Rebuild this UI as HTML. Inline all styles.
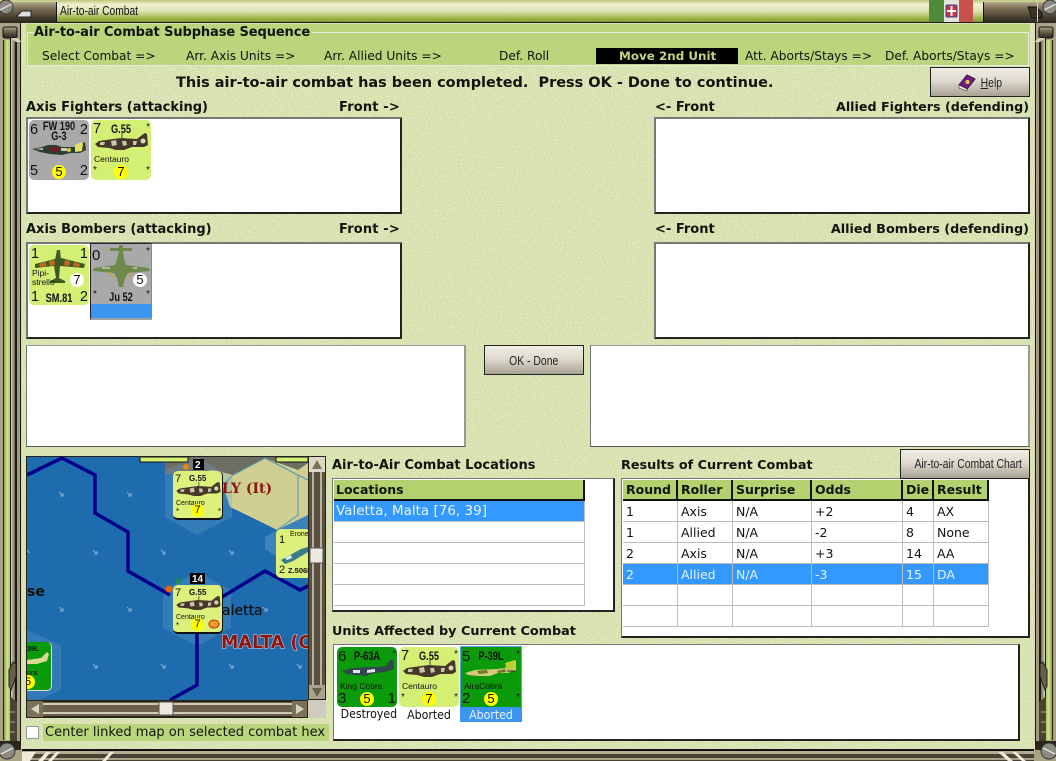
<!DOCTYPE html>
<html><head><meta charset="utf-8">
<style>
html,body{margin:0;padding:0;width:1056px;height:761px;overflow:hidden;background:#d3dea8}
*{box-sizing:border-box}
body{position:relative;font-family:"DejaVu Sans","Liberation Sans",sans-serif;color:#10140c}
.a{position:absolute}
.t{position:absolute;white-space:pre;line-height:16px;font-size:12.2px}
.b{font-weight:bold;font-size:13px}
.box{position:absolute;background:#fff;border:2px solid #222;border-top-color:#777;border-left-color:#777}
.btn{position:absolute;background:linear-gradient(#f1ede4,#e0dbcf 45%,#a8a294);border:1px solid #222;text-align:center;font-family:"Liberation Sans",sans-serif;font-size:13px;color:#222}
.btn span{display:inline-block;transform:scaleX(.8)}
.cell{position:absolute;height:21px;border-right:1px solid #bbb;border-bottom:1px solid #bbb;font-size:12.5px;line-height:21px;padding-left:3px;white-space:pre;background:#fff}
.hd{position:absolute;height:21px;background:#b4d170;border-right:2px solid #111;border-bottom:2px solid #111;font-weight:bold;font-size:12.5px;line-height:20px;padding-left:3px;white-space:pre}
.sel{background:#3399ff;color:#e8f2ff}
.c{position:absolute;width:60px;height:60px;border-radius:5px;font-family:"Liberation Sans",sans-serif;color:#111;overflow:hidden}
.c span{position:absolute;white-space:pre;line-height:1}
.y{background:#d3ef74}.g{background:#a9a9a9}.d{background:#0a9a0a}
.n{font-size:14.5px}
.nm{font-size:12px;font-weight:bold;left:0;width:100%;text-align:center;transform:scaleX(.77)}
.sm{font-size:8.5px}
.die{position:absolute;width:14px;height:14px;border-radius:50%;background:#ff0;text-align:center;font-size:13px;line-height:14px}
.wh{background:#fff}
.c svg{position:absolute;left:0;top:0}
.cap{position:absolute;font-size:12.5px;font-family:"DejaVu Sans",sans-serif;text-align:center;line-height:16px;white-space:pre;transform:scaleX(.88)}
</style></head><body>

<svg class="a" style="left:0;top:0" width="1056" height="761">
<defs>
<filter id="nz" x="0" y="0" width="100%" height="100%"><feTurbulence type="fractalNoise" baseFrequency=".8" numOctaves="2" seed="4"/><feColorMatrix values="0 0 0 0 .95 0 0 0 0 .97 0 0 0 0 .82 3 0 0 0 -1.3"/></filter>
<filter id="nd" x="0" y="0" width="100%" height="100%"><feTurbulence type="fractalNoise" baseFrequency=".7" numOctaves="2" seed="9"/><feColorMatrix values="0 0 0 0 .68 0 0 0 0 .76 0 0 0 0 .46 0 3 0 0 -1.4"/></filter>
<linearGradient id="tb" x1="0" y1="0" x2="0" y2="1"><stop offset="0" stop-color="#bcc878"/><stop offset=".2" stop-color="#eef0d2"/><stop offset=".5" stop-color="#dfe4b4"/><stop offset=".8" stop-color="#a4b850"/><stop offset="1" stop-color="#7f9a2a"/></linearGradient>
<linearGradient id="br" x1="0" y1="0" x2="0" y2="1"><stop offset="0" stop-color="#b4aa90"/><stop offset=".3" stop-color="#7d7058"/><stop offset=".7" stop-color="#4a4232"/><stop offset="1" stop-color="#2b261c"/></linearGradient>
<linearGradient id="gv" x1="0" y1="0" x2="1" y2="0"><stop offset="0" stop-color="#8a9a50"/><stop offset=".5" stop-color="#d0e48c"/><stop offset="1" stop-color="#b0c868"/></linearGradient>
<linearGradient id="gy" x1="0" y1="0" x2="1" y2="0"><stop offset="0" stop-color="#d6d2bc"/><stop offset="1" stop-color="#6f6a54"/></linearGradient>
<g id="fr">
<rect x="0" y="23" width="22" height="727" fill="#a8a484"/>
<rect x="3" y="40" width="1" height="700" fill="#2a2418"/>
<rect x="4" y="40" width="6" height="700" fill="url(#gv)"/>
<rect x="10" y="38" width="1" height="700" fill="#1d1a12"/>
<rect x="11" y="38" width="4" height="660" fill="url(#gy)"/>
<rect x="15" y="38" width="2" height="700" fill="#1d1a12"/>
<rect x="17" y="30" width="3" height="710" fill="#a09a80"/>
<rect x="20" y="23" width="1" height="727" fill="#1d1a12"/>
<rect x="21" y="23" width="1" height="727" fill="#d8d8b8"/>
<rect x="3" y="27" width="14" height="11" rx="2" fill="url(#br)" stroke="#111"/>
<path d="M11 38h6l5 4h-6z" fill="#d4d0b4"/>
<path d="M10 696l7 6v44H10z" fill="#4a4232"/>
<path d="M11 690l5-14v-12l-3-2-4 8v16z" fill="#6a6048" stroke="#222"/>
<path d="M10 712h5M10 722h5M10 732h5" stroke="#b4aa90"/>
<rect x="0" y="741" width="21" height="9" fill="#2b261c"/>
<rect x="0" y="750" width="22" height="11" fill="#a8a484"/>
<circle cx="7" cy="751" r="8" fill="#8b8b84" stroke="#333"/><path d="M1 754l12-6" stroke="#e4e4de" stroke-width="1.5"/>
</g>
<symbol id="g55" viewBox="0 0 60 60"><path d="M4 24l4-3 14-2 8-1 16 1 5-4 3-2 2 1 1 11-4 2-12 0-8 3-8 0-7-2-11-1z" fill="#47392a"/><path d="M9 22l5 0-1 3-4 0zM20 21l5-1 1 5-5 1zM31 21l4 0 1 4-4 1zM42 21l4 0-1 4-3 0z" fill="#c9c6ae"/><circle cx="52" cy="21" r="2.5" fill="#d8d4b8"/><path d="M31 13v6" stroke="#445" stroke-width="1"/></symbol>
<symbol id="wing" viewBox="0 0 60 60"><path d="M6 19l24-6 2 0 24 6-1 4-24-2-1 12 6 3v2H21v-2l6-3-2-12-19 2z" fill="#3f5a24"/><path d="M10 19l6-2 2 4-7 1zM20 16l5-1 1 5-5 1zM36 15l5 1-1 5-5-1zM45 17l6 2-1 3-6-1z" fill="#c46a1c"/><path d="M28 5h3l1 10-1 6h-4l-1-6z" fill="#3f5a24"/></symbol>
</defs>
<rect width="1056" height="761" fill="#d3dea8"/>
<rect x="22" y="22" width="1012" height="728" filter="url(#nd)" opacity=".35"/>
<rect x="22" y="22" width="1012" height="728" filter="url(#nz)" opacity=".6"/>
<use href="#fr"/>
<use href="#fr" transform="translate(1056,0) scale(-1,1)"/>
<!-- top bar -->
<rect x="0" y="0" width="1056" height="22" fill="url(#tb)"/>
<rect x="0" y="22" width="1056" height="1" fill="#1a1a10"/>
<rect x="0" y="2" width="57" height="21" fill="url(#br)"/>
<rect x="56" y="2" width="1" height="21" fill="#111"/>
<path d="M16 17l6-6h9v6z" fill="#ddd" stroke="#222"/>
<circle cx="6" cy="7" r="7" fill="#8b8b84" stroke="#333"/><path d="M0 10l12-6" stroke="#ddd" stroke-width="1.5"/>
<!-- flag -->
<rect x="929" y="0" width="15" height="22" fill="#4f8c3a"/><rect x="944" y="0" width="15" height="22" fill="#e4e4dc"/><rect x="959" y="0" width="14" height="22" fill="#c8524c"/>
<rect x="946" y="5" width="11" height="12" rx="1" fill="#c8323c" stroke="#3a4a9a"/><path d="M951.5 6v10M947 11h9" stroke="#fff" stroke-width="2"/>
<rect x="983" y="2" width="73" height="21" fill="url(#br)"/>
<rect x="983" y="2" width="1" height="21" fill="#111"/>
<path d="M1028 7h8l6 6v5h-10z" fill="#3a3426" stroke="#111"/>
<circle cx="1050" cy="7" r="7" fill="#8b8b84" stroke="#333"/><path d="M1044 10l12-6" stroke="#ddd" stroke-width="1.5"/>
<rect x="1037" y="0" width="1" height="22" fill="#d8dc8c"/>
<!-- bottom frame -->
<rect x="22" y="749" width="1012" height="2" fill="#111"/>
<rect x="22" y="751" width="1012" height="10" fill="#4a4232"/>
<rect x="22" y="751" width="1012" height="3" fill="#b4aa90"/>
<rect x="22" y="758" width="1012" height="2" fill="#a8a08a"/>
<path d="M22 752h14l-6 9h-8zM38 761l8-9h5l-8 9zM48 761l8-9h4l-8 9zM102 761l8-9h4l-8 9zM998 752l10 9h5l-10-9zM1016 752l10 9h-4l-10-9z" fill="#efeadb"/>
</svg>

<!-- title -->
<div class="t" style="left:60px;top:3px;font-family:'Liberation Sans',sans-serif;font-size:12.5px;transform:scaleX(.82);transform-origin:0 0;color:#111">Air-to-air Combat</div>

<!-- group -->
<div class="a" style="left:26px;top:24px;width:1004px;height:42px;background:#bbd57c"></div>
<div class="a" style="left:27px;top:32px;width:1002px;height:34px;border:1px solid #e8e8dc"></div>
<div class="t b" style="left:34px;top:24px;height:16px;margin-top:1px;background:#bbd57c;padding-right:2px;letter-spacing:-.1px">Air-to-air Combat Subphase Sequence</div>
<div class="t" style="left:42px;top:48px">Select Combat =&gt;</div>
<div class="t" style="left:186px;top:48px">Arr. Axis Units =&gt;</div>
<div class="t" style="left:324px;top:48px">Arr. Allied Units =&gt;</div>
<div class="t" style="left:499px;top:48px">Def. Roll</div>
<div class="a" style="left:596px;top:48px;width:142px;height:16px;background:#000"></div>
<div class="t" style="left:619px;top:48px;font-weight:bold;color:#bdd67e;font-size:11.9px">Move 2nd Unit</div>
<div class="t" style="left:745px;top:48px">Att. Aborts/Stays =&gt;</div>
<div class="t" style="left:885px;top:48px">Def. Aborts/Stays =&gt;</div>

<div class="t" style="left:176px;top:75px;font-weight:bold;font-size:14.47px">This air-to-air combat has been completed.  Press OK - Done to continue.</div>

<div class="btn" style="left:930px;top:67px;width:100px;height:30px;line-height:29px;padding-left:47px;text-align:left"><span><u>H</u>elp</span></div>
<svg class="a" style="left:958px;top:74px" width="18" height="18"><path d="M1 11l8-10 8 4-8 10z" fill="#7a1a8a" stroke="#2a1030"/><path d="M1 11l8 4 0 2-8-3z" fill="#eee" stroke="#333" stroke-width=".6"/><circle cx="9.500" cy="8" r="2" fill="#e8d040"/></svg>

<div class="t b" style="left:26px;top:100px">Axis Fighters (attacking)</div>
<div class="t b" style="left:339px;top:100px;letter-spacing:.15px">Front -&gt;</div>
<div class="t b" style="left:655px;top:100px">&lt;- Front</div>
<div class="t b" style="right:27px;top:99px;font-size:12.7px">Allied Fighters (defending)</div>
<div class="box" style="left:26px;top:117px;width:376px;height:97px"></div>
<div class="box" style="left:654px;top:117px;width:376px;height:97px"></div>

<div class="t b" style="left:26px;top:222px">Axis Bombers (attacking)</div>
<div class="t b" style="left:339px;top:222px;letter-spacing:.15px">Front -&gt;</div>
<div class="t b" style="left:655px;top:222px">&lt;- Front</div>
<div class="t b" style="right:27px;top:222px;font-size:12.8px">Allied Bombers (defending)</div>
<div class="box" style="left:26px;top:242px;width:376px;height:97px"></div>
<div class="box" style="left:654px;top:242px;width:376px;height:97px"></div>

<div class="box" style="left:26px;top:345px;width:440px;height:102px;border-width:1px 2px 1px 1px;border-color:#999 #999 #555 #777"></div>
<div class="box" style="left:590px;top:345px;width:440px;height:102px;border-width:1px 2px 1px 1px;border-color:#999 #999 #555 #777"></div>
<div class="btn" style="left:484px;top:345px;width:100px;height:30px;line-height:29px"><span>OK - Done</span></div>

<!-- counters row 1 -->
<div class="c g" style="left:29px;top:120px">
<svg width="60" height="60"><path d="M3 29l10-2 6-2 8 0 6 2 16 0 5-4 2-1 1 8-6 3-10 0-8 2-12-1-10-2z" fill="#2e3d30"/><path d="M20 27l10 0 1 4-9 1z" fill="#6a2020"/><path d="M6 29l8-1v2zM32 28h6v3h-6z" fill="#c8ccb8"/><path d="M46 25l6-3 2 2-1 7-7 1z" fill="#e8e060"/><circle cx="40" cy="30" r="2" fill="#d8c828"/></svg>
<span class="n" style="left:1px;top:3px">6</span><span class="n" style="right:1px;top:3px">2</span>
<span class="n" style="left:1px;top:44px">5</span><span class="n" style="right:1px;top:44px">2</span>
<span class="nm" style="top:0">FW 190</span><span class="nm" style="top:10px">G-3</span>
<div class="die" style="left:23px;top:45px">5</div></div>
<div class="c y" style="left:91px;top:120px">
<svg width="60" height="60"><use href="#g55" width="60" height="60"/></svg>
<span class="n" style="left:2px;top:2px">7</span><span style="right:1px;top:3px;font-size:10px">*</span>
<span class="nm" style="top:3px">G.55</span>
<span class="sm" style="left:3px;top:35px">Centauro</span>
<span style="left:2px;top:46px;font-size:10px">*</span><span style="right:1px;top:46px;font-size:10px">*</span>
<div class="die" style="left:23px;top:45px">7</div></div>

<!-- counters row 2 -->
<div class="c y" style="left:29px;top:245px">
<svg width="60" height="60"><use href="#wing" width="60" height="60"/></svg>
<span class="n" style="left:2px;top:2px">1</span><span class="n" style="right:1px;top:2px">1</span>
<span class="sm" style="left:3px;top:24px">Pipi-</span><span class="sm" style="left:3px;top:33px">strello</span>
<span class="n" style="left:2px;top:45px">1</span><span class="n" style="right:1px;top:45px">2</span>
<span class="nm" style="top:47px">SM.81</span>
<div class="die wh" style="left:41px;top:28px">7</div></div>
<div class="a" style="left:90px;top:243px;width:62px;height:77px;background:#3a96f0;border:1px solid #222;border-right-color:#b08040;border-bottom:2px solid #a0a0a0"></div>
<div class="c g" style="left:91px;top:244px;border-radius:0">
<svg width="60" height="60"><path d="M28 7h-9V4h9V1h4v3h9v3h-9l1 8 2 6 23 3 1 3-22 2-3 5-2 9h-4l-2-9-3-5-21-2 1-3 21-3 2-6z" fill="#6e8a4a"/><path d="M19 28l3 6M41 28l-3 6" stroke="#c8a030" stroke-width="1.5"/><path d="M11 24h8M46 24h-4" stroke="#e8e8e0"/></svg>
<span class="n" style="left:1px;top:4px;font-size:15px">0</span><span style="right:1px;top:3px;font-size:10px">*</span>
<span style="left:2px;top:46px;font-size:10px">*</span><span style="right:1px;top:46px;font-size:10px">*</span>
<span class="nm" style="top:47px">Ju 52</span>
<div class="die wh" style="left:42px;top:29px">5</div></div>

<!-- map -->
<div class="a" style="left:26px;top:456px;width:300px;height:262px;background:#222"></div>
<svg class="a" style="left:27px;top:457px" width="281" height="243" viewBox="27 457 281 243">
<rect x="27" y="457" width="281" height="243" fill="#1e6cae"/>
<path d="M165 457l0 13 57 13 8 24 27 13 20 10 31-15V457z" fill="#cfcf94"/>
<path d="M165 457h143v6l-10 7-33-12-32 17-20-5-26 4-22 0z" fill="#6e6d64"/>
<path d="M233 475l32-17 33 17v40l-21 15M298 475l10 5M233 475l-10 10" fill="none" stroke="#4a96a8"/>
<path d="M165 470l32-13 35 20v40l-35 18-32-18z" fill="#6ea4d0" opacity=".28"/>
<path d="M265 537l12-7 31-15v12l-31 30-12-8z" fill="#6ea4d0" opacity=".4"/>
<path d="M163 590l34-18 34 18v38l-34 18-34-18z" fill="#6ea4d0" opacity=".28"/>
<path d="M27 630l34 15v45l-34 15z" fill="#6ea4d0" opacity=".25"/>
<g fill="none" stroke="#00008a" stroke-width="3.5">
<path d="M27 475L62 458 95 475V513L128 532V571L170 595"/>
<path d="M222 597L265 571 300 590 308 586"/>
<path d="M197 633V685L170 700"/>
</g>
<g stroke="#a4c8e6" stroke-width="1" fill="none" opacity=".75">
<path d="M59 492l4 4m0-3v3h-3M127 492l4 4m0-3v3h-3M93 550l4 4m0-3v3h-3M161 550l4 4m0-3v3h-3M229 550l4 4m0-3v3h-3M59 607l4 4m0-3v3h-3M127 607l4 4m0-3v3h-3M263 607l4 4m0-3v3h-3M93 664l4 4m0-3v3h-3M161 664l4 4m0-3v3h-3M229 664l4 4m0-3v3h-3M297 664l4 4m0-3v3h-3M27 550l3 3"/>
</g>
<text x="27" y="596" font-family="DejaVu Sans,sans-serif" font-weight="bold" font-size="14" fill="#111">se</text>
<text x="222" y="615" font-family="DejaVu Sans,sans-serif" font-size="14" fill="#111" stroke="#111" stroke-width=".2">aletta</text>
<text x="222" y="493" font-family="DejaVu Serif,serif" font-weight="bold" font-size="14" fill="#8a1410">LY (It)</text>
<text x="221" y="648" font-family="DejaVu Sans,sans-serif" font-weight="bold" font-size="17.500" fill="#8a1410" stroke="#e8d8d8" stroke-width="1" style="paint-order:stroke">MALTA (C</text>
<rect x="140" y="457" width="48" height="5" fill="#d3ef74" stroke="#111"/>
<rect x="276" y="457" width="32" height="5" fill="#d3ef74" stroke="#111"/>
<circle cx="186" cy="467" r="3" fill="#e8840c"/><rect x="193" y="459" width="11" height="11" fill="#000"/>
<text x="195" y="468" font-family="Liberation Sans,sans-serif" font-size="10" font-weight="bold" fill="#fff">2</text>
<circle cx="178" cy="581" r="3" fill="#1a8a5a"/><circle cx="169" cy="589" r="3.5" fill="#e8640c"/><rect x="190" y="573" width="15" height="11" fill="#000"/>
<text x="192" y="582" font-family="Liberation Sans,sans-serif" font-size="10" font-weight="bold" fill="#fff">14</text>
</svg>
<div class="c" style="left:173px;top:471px;width:50px;height:49px;background:#dcf07c;border-right:1px solid #111;border-bottom:2px solid #111"><svg width="50" height="50"><use href="#g55" width="50" height="50"/></svg><span style="left:2px;top:3px;font-size:11px">7</span><span style="left:16px;top:4px;font-size:8px;font-weight:bold">G.55</span><span style="left:3px;top:29px;font-size:7px">Centauro</span><span style="left:3px;top:37px;font-size:8px">*</span><span style="right:1px;top:37px;font-size:8px">*</span><div class="die" style="left:18px;top:33px;width:13px;height:13px;font-size:11px;line-height:13px">7</div></div>
<div class="c" style="left:173px;top:585px;width:50px;height:49px;background:#dcf07c;border-right:1px solid #111;border-bottom:2px solid #111"><svg width="50" height="50"><use href="#g55" width="50" height="50"/><ellipse cx="41" cy="39" rx="5" ry="4" fill="#f2a020" stroke="#c82020"/></svg><span style="left:2px;top:3px;font-size:11px">7</span><span style="left:16px;top:4px;font-size:8px;font-weight:bold">G.55</span><span style="left:3px;top:29px;font-size:7px">Centauro</span><span style="left:3px;top:37px;font-size:8px">*</span><div class="die" style="left:18px;top:33px;width:13px;height:13px;font-size:11px;line-height:13px">7</div></div>
<div class="c" style="left:276px;top:529px;width:32px;height:49px;background:#dcf07c;border-radius:5px 0 0 5px"><svg width="32" height="49"><path d="M5 31l20-11 7-2v5l-15 9-8 3z" fill="#3a7a8a"/><path d="M9 29l6-3 1 3-5 2z" fill="#eee"/></svg><span style="left:3px;top:6px;font-size:11px">1</span><span style="left:14px;top:2px;font-size:7px">Erone</span><span style="left:3px;top:36px;font-size:11px">2</span><span style="left:12px;top:38px;font-size:7.5px;font-weight:bold">Z.506B</span></div>
<div class="c" style="left:27px;top:642px;width:25px;height:49px;background:#0a9a0a;border-radius:0 5px 5px 0;border-right:1px solid #ddd;border-bottom:1px solid #ddd"><svg width="25" height="49"><path d="M0 18l14-2 6-6 2 2-2 7-10 3-10 0z" fill="#d8d890"/></svg><span style="left:0;top:4px;font-size:7px;font-weight:bold">39L</span><span style="left:0;top:28px;font-size:7px">ora</span><div class="die" style="left:-6px;top:33px;width:14px;height:14px;font-size:11px">5</div></div>

<!-- map scrollbars -->
<svg class="a" style="left:308px;top:457px" width="18" height="261">
<rect width="18" height="261" fill="#2a2418"/>
<rect x="1" y="15" width="16" height="213" fill="#5a5040"/>
<rect x="4" y="15" width="2" height="213" fill="#b8b2a0"/><rect x="12" y="15" width="2" height="213" fill="#b8b2a0"/>
<rect x="1" y="0" width="16" height="15" fill="#dcd8c6"/><path d="M9 3l5 9H4z" fill="#7a705a"/>
<rect x="1" y="228" width="16" height="14" fill="#a8a28e"/><path d="M9 240l5-9H4z" fill="#6a6048"/>
<rect x="2" y="91" width="13" height="15" fill="#ece9e0" stroke="#555"/>
<rect x="0" y="243" width="18" height="18" fill="#cfcbbf"/>
</svg>
<svg class="a" style="left:27px;top:700px" width="281" height="18">
<rect width="281" height="18" fill="#2a2418"/>
<rect x="16" y="2" width="250" height="14" fill="#6a6048"/>
<rect x="16" y="3" width="250" height="2" fill="#cfcab8"/><rect x="16" y="12" width="250" height="2" fill="#cfcab8"/>
<rect x="0" y="1" width="16" height="16" fill="#7d7058"/><path d="M4 9l8-5v10z" fill="#d8d4c4"/>
<rect x="265" y="1" width="15" height="16" fill="#7d7058"/><path d="M277 9l-8-5v10z" fill="#d8d4c4"/>
<rect x="132" y="2" width="14" height="13" fill="#ece9e0" stroke="#555"/>
</svg>

<!-- checkbox -->
<div class="a" style="left:43px;top:724px;width:286px;height:17px;background:#bbd57c"></div>
<div class="a" style="left:26px;top:726px;width:13px;height:13px;background:#fff;border:1px solid #999"></div>
<div class="t" style="left:45px;top:725px;font-size:13px">Center linked map on selected combat hex</div>

<!-- locations -->
<div class="t b" style="left:332px;top:458px">Air-to-Air Combat Locations</div>
<div class="box" style="left:332px;top:478px;width:283px;height:134px;border-width:1px 2px 2px 1px;border-color:#777 #222 #222 #777"></div>
<div class="hd" style="left:334px;top:480px;width:251px;padding-left:2px">Locations</div>
<div class="cell sel" style="left:334px;top:501px;width:251px;font-size:13.500px;padding-left:2px">Valetta, Malta [76, 39]</div>
<div class="cell" style="left:334px;top:522px;width:251px"></div>
<div class="cell" style="left:334px;top:543px;width:251px"></div>
<div class="cell" style="left:334px;top:564px;width:251px"></div>
<div class="cell" style="left:334px;top:585px;width:251px"></div>

<!-- results -->
<div class="t b" style="left:621px;top:458px;font-size:12.8px">Results of Current Combat</div>
<div class="box" style="left:621px;top:478px;width:409px;height:160px;border-width:1px 2px 2px 1px;border-color:#777 #222 #222 #777"></div>
<div class="btn" style="left:900px;top:449px;width:130px;height:30px;line-height:28px"><span style="white-space:nowrap">Air-to-air Combat Chart</span></div>

<div class="hd" style="left:623px;top:480px;width:55px">Round</div>
<div class="hd" style="left:678px;top:480px;width:55px">Roller</div>
<div class="hd" style="left:733px;top:480px;width:79px">Surprise</div>
<div class="hd" style="left:812px;top:480px;width:91px">Odds</div>
<div class="hd" style="left:903px;top:480px;width:31px">Die</div>
<div class="hd" style="left:934px;top:480px;width:55px">Result</div>

<div class="cell" style="left:623px;top:501px;width:55px">1</div><div class="cell" style="left:678px;top:501px;width:55px">Axis</div><div class="cell" style="left:733px;top:501px;width:79px">N/A</div><div class="cell" style="left:812px;top:501px;width:91px">+2</div><div class="cell" style="left:903px;top:501px;width:31px">4</div><div class="cell" style="left:934px;top:501px;width:55px">AX</div>
<div class="cell" style="left:623px;top:522px;width:55px">1</div><div class="cell" style="left:678px;top:522px;width:55px">Allied</div><div class="cell" style="left:733px;top:522px;width:79px">N/A</div><div class="cell" style="left:812px;top:522px;width:91px">-2</div><div class="cell" style="left:903px;top:522px;width:31px">8</div><div class="cell" style="left:934px;top:522px;width:55px">None</div>
<div class="cell" style="left:623px;top:543px;width:55px">2</div><div class="cell" style="left:678px;top:543px;width:55px">Axis</div><div class="cell" style="left:733px;top:543px;width:79px">N/A</div><div class="cell" style="left:812px;top:543px;width:91px">+3</div><div class="cell" style="left:903px;top:543px;width:31px">14</div><div class="cell" style="left:934px;top:543px;width:55px">AA</div>
<div class="cell sel" style="left:623px;top:564px;width:55px">2</div><div class="cell sel" style="left:678px;top:564px;width:55px">Allied</div><div class="cell sel" style="left:733px;top:564px;width:79px">N/A</div><div class="cell sel" style="left:812px;top:564px;width:91px">-3</div><div class="cell sel" style="left:903px;top:564px;width:31px">15</div><div class="cell sel" style="left:934px;top:564px;width:55px">DA</div>
<div class="cell" style="left:623px;top:585px;width:55px"></div><div class="cell" style="left:678px;top:585px;width:55px"></div><div class="cell" style="left:733px;top:585px;width:79px"></div><div class="cell" style="left:812px;top:585px;width:91px"></div><div class="cell" style="left:903px;top:585px;width:31px"></div><div class="cell" style="left:934px;top:585px;width:55px"></div>
<div class="cell" style="left:623px;top:606px;width:55px"></div><div class="cell" style="left:678px;top:606px;width:55px"></div><div class="cell" style="left:733px;top:606px;width:79px"></div><div class="cell" style="left:812px;top:606px;width:91px"></div><div class="cell" style="left:903px;top:606px;width:31px"></div><div class="cell" style="left:934px;top:606px;width:55px"></div>

<!-- units affected -->
<div class="t b" style="left:332px;top:624px;font-size:12.8px">Units Affected by Current Combat</div>
<div class="box" style="left:333px;top:644px;width:687px;height:97px;border-width:1px 2px 2px 1px;border-color:#777 #222 #222 #777"></div>

<div class="c d" style="left:337px;top:647px">
<svg width="60" height="60"><path d="M5 24l10-3 18-1 8 0 8-1 4-6 3 0 1 9-10 3-10 1-8 3-10-1-9-1z" fill="#33464e"/><path d="M16 23h7v3h-7zM30 23l8-1v3l-8 1z" fill="#e2e8ea"/></svg>
<span class="n" style="left:1px;top:2px;font-size:15px">6</span><span style="right:1px;top:3px;font-size:10px">*</span>
<span class="nm" style="top:3px">P-63A</span><span class="sm" style="left:3px;top:35px">King Cobra</span>
<span class="n" style="left:1px;top:44px;font-size:15px">3</span><span class="n" style="right:1px;top:44px;font-size:15px">1</span>
<div class="die" style="left:23px;top:45px">5</div></div>
<div class="c y" style="left:399px;top:647px">
<svg width="60" height="60"><use href="#g55" width="60" height="60"/></svg>
<span class="n" style="left:2px;top:2px">7</span><span style="right:1px;top:3px;font-size:10px">*</span>
<span class="nm" style="top:3px">G.55</span><span class="sm" style="left:3px;top:35px">Centauro</span>
<span style="left:2px;top:46px;font-size:10px">*</span><span style="right:1px;top:46px;font-size:10px">*</span>
<div class="die" style="left:23px;top:45px">7</div></div>
<div class="a" style="left:460px;top:646px;width:62px;height:62px;border:1px solid #5aa2f0"></div>
<div class="c d" style="left:461px;top:647px;border-radius:0">
<svg width="60" height="60"><path d="M4 26l10-3 22-1 8-1 5-5 5-3 1 1 0 9-8 3-10 0-8 3-12 0-10-1z" fill="#d4c878"/><path d="M16 24l10-1 1 3-9 1zM36 24l8-2 1 3-8 1z" fill="#6a7a30"/><path d="M44 16l10-3 0 8-8 2z" fill="#b8d030"/><path d="M46 24h8" stroke="#222"/></svg>
<span class="n" style="left:1px;top:2px;font-size:15px">5</span><span style="right:1px;top:3px;font-size:10px">*</span>
<span class="nm" style="top:3px">P-39L</span><span class="sm" style="left:3px;top:35px">AiraCobra</span>
<span class="n" style="left:1px;top:44px;font-size:15px">2</span><span style="right:1px;top:46px;font-size:10px">*</span>
<div class="die" style="left:23px;top:45px">5</div></div>

<div class="cap" style="left:337px;top:706px;width:60px">Destroyed</div>
<div class="cap" style="left:399px;top:707px;width:60px">Aborted</div>
<div class="a" style="left:460px;top:707px;width:62px;height:15px;background:#3a96f0"></div>
<div class="cap" style="left:461px;top:707px;width:60px;color:#e8f2ff">Aborted</div>

</body></html>
